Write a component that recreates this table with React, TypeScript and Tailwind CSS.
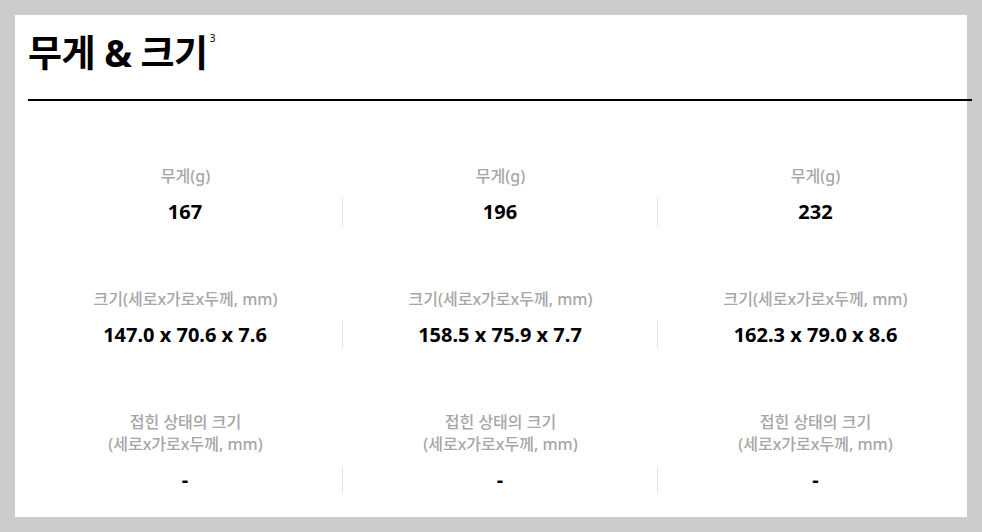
const rows = [
  { label: ["무게(g)"], values: ["167", "196", "232"] },
  {
    label: ["크기(세로x가로x두께, mm)"],
    values: ["147.0 x 70.6 x 7.6", "158.5 x 75.9 x 7.7", "162.3 x 79.0 x 8.6"],
  },
  {
    label: ["접힌 상태의 크기", "(세로x가로x두께, mm)"],
    values: ["-", "-", "-"],
  },
];

export default function App() {
  return (
    <div
      className="h-[532px] w-[982px] overflow-hidden bg-[#cccccc] pl-[15px] pt-[15px]"
      style={{ fontFamily: '"Noto Sans", "Noto Sans CJK KR", sans-serif' }}
    >
      <div className="h-[502px] w-[952px] bg-white pl-[13px]">
        {/* Header */}
        <div className="w-[944px] border-b-2 border-black pb-[22px] pt-[13px]">
          <h2 className="flex items-start text-[37px] font-bold leading-[49px] tracking-[-0.5px] text-black">
            무게 &amp; 크기
            <sup className="ml-[2px] mt-[10px] text-[10px] font-normal leading-none">3</sup>
          </h2>
        </div>

        {/* Spec rows */}
        <div className="flex w-[945px] flex-col pt-[64px]">
          {rows.map((row, i) => (
            <div key={i} className="grid grid-cols-3 pb-[62px]">
              {row.values.map((v, j) => (
                <div key={j} className="flex flex-col items-center">
                  <div className="text-center text-[16px] font-medium leading-[22px] text-[#a6a6a6]">
                    {row.label.map((l, k) => (
                      <div key={k}>{l}</div>
                    ))}
                  </div>
                  <div
                    className={
                      "mt-[11px] flex h-[28px] w-full items-center justify-center text-[20px] font-bold text-black " +
                      (j < 2 ? "border-r border-[#e6e6e6]" : "")
                    }
                  >
                    {v}
                  </div>
                </div>
              ))}
            </div>
          ))}
        </div>
      </div>
    </div>
  );
}
